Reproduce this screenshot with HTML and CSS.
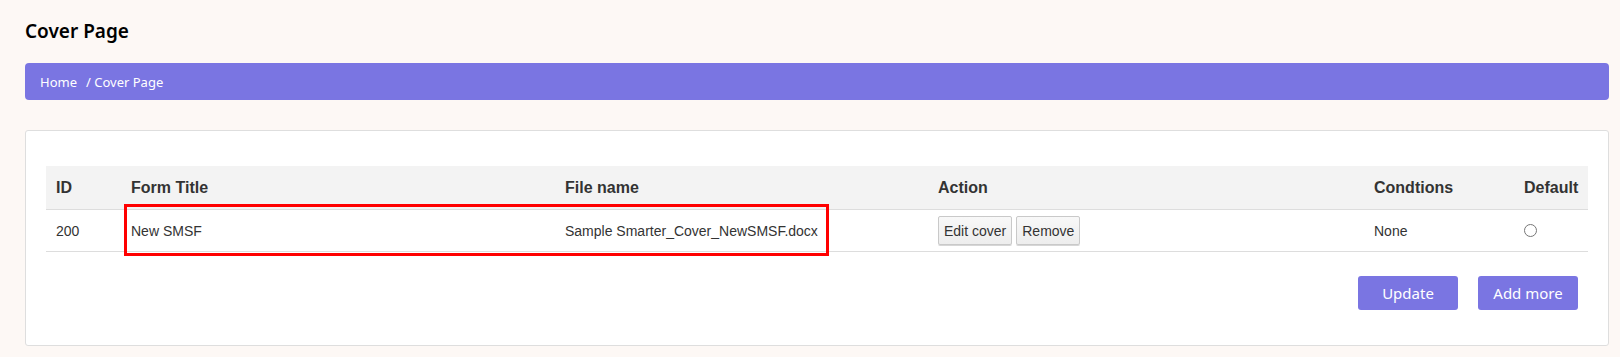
FILE: index.html
```html
<!DOCTYPE html>
<html lang="en">
<head>
    <meta charset="UTF-8">
    <title>Cover Page</title>
    <link rel="stylesheet" href="styles.css">
</head>
<body>
    <div class="page">
        <h1 class="page-title">Cover Page</h1>
        <div class="breadcrumb">
            <span>Home</span>
            <span class="crumb-sep">/ Cover Page</span>
        </div>
        <div class="card">
            <table class="cover-table">
                <colgroup>
                    <col class="col-id">
                    <col class="col-title">
                    <col class="col-file">
                    <col class="col-action">
                    <col class="col-cond">
                    <col>
                </colgroup>
                <thead>
                    <tr>
                        <th>ID</th>
                        <th>Form Title</th>
                        <th>File name</th>
                        <th>Action</th>
                        <th>Condtions</th>
                        <th>Default</th>
                    </tr>
                </thead>
                <tbody>
                    <tr>
                        <td>200</td>
                        <td>New SMSF</td>
                        <td>Sample Smarter_Cover_NewSMSF.docx</td>
                        <td>
                            <div class="actions">
                                <button class="btn-small">Edit cover</button>
                                <button class="btn-small">Remove</button>
                            </div>
                        </td>
                        <td>None</td>
                        <td><input type="radio" name="default" class="radio"></td>
                    </tr>
                </tbody>
            </table>
            <div class="card-footer">
                <button class="btn-primary">Update</button>
                <button class="btn-primary">Add more</button>
            </div>
            <div class="highlight"></div>
        </div>
    </div>
</body>
</html>
```

FILE: styles.css
```css
body {
    margin: 0;
    padding: 0;
    background: #fdf8f5;
    font-family: 'Noto Sans', 'Open Sans', sans-serif;
    color: #111;
}

.page {
    padding: 19px 11px 0 25px;
}

.page-title {
    margin: 0;
    font-size: 19px;
    font-weight: 600;
    line-height: 24px;
    color: #000;
}

.breadcrumb {
    margin-top: 20px;
    height: 37px;
    background: #7a75e2;
    border-radius: 4px;
    padding: 0 15px;
    display: flex;
    align-items: center;
    color: #fff;
    font-size: 13px;
}

.crumb-sep {
    margin-left: 9px;
}

.card {
    position: relative;
    margin-top: 30px;
    background: #fff;
    border: 1px solid #dedede;
    border-radius: 3px;
    padding: 35px 20px 35px 20px;
}

.cover-table {
    width: 100%;
    border-collapse: collapse;
    table-layout: fixed;
    font-family: 'Liberation Sans', Arial, sans-serif;
    color: #333;
}

.col-id { width: 75px; }
.col-title { width: 434px; }
.col-file { width: 373px; }
.col-action { width: 436px; }
.col-cond { width: 150px; }

.cover-table th {
    background: #f3f3f3;
    height: 43px;
    padding: 0 10px;
    text-align: left;
    font-size: 16px;
    font-weight: bold;
    border-bottom: 1px solid #ddd;
}

.cover-table td {
    height: 41px;
    padding: 0 10px;
    font-size: 14px;
    border-bottom: 1px solid #ddd;
    vertical-align: middle;
}

.actions {
    display: flex;
    gap: 4px;
}

.btn-small {
    height: 29px;
    padding: 0 5px;
    font-family: 'Liberation Sans', Arial, sans-serif;
    font-size: 14px;
    color: #333;
    background: linear-gradient(#f8f8f8, #ededed);
    border: 1px solid #c9c9c9;
    border-radius: 2px;
    box-shadow: 0 1px 0 #d6d6d6;
}

.radio {
    margin: 0;
    width: 13px;
    height: 13px;
    display: block;
}

.card-footer {
    margin-top: 24px;
    display: flex;
    justify-content: flex-end;
    gap: 20px;
    padding-right: 10px;
}

.btn-primary {
    width: 100px;
    height: 34px;
    background: #7a75e2;
    color: #fff;
    border: none;
    border-radius: 3px;
    font-family: 'Noto Sans', 'Open Sans', sans-serif;
    font-size: 15px;
}

/* annotation box over the first row */
.highlight {
    position: absolute;
    left: 98px;
    top: 73px;
    width: 705px;
    height: 52px;
    border: 3px solid #f00;
    box-sizing: border-box;
}
```
